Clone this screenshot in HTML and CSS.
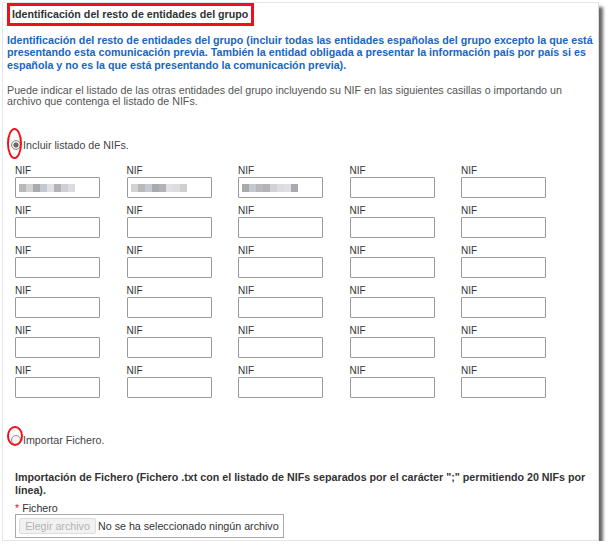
FILE: index.html
```html
<!DOCTYPE html>
<html lang="es">
<head>
<meta charset="utf-8">
<title>Identificación del resto de entidades del grupo</title>
<link rel="stylesheet" href="styles.css">
</head>
<body>
<div class="panel">
  <div class="title">Identificación del resto de entidades del grupo</div>
  <p class="intro">Identificación del resto de entidades del grupo (incluir todas las entidades españolas del grupo excepto la que está presentando esta comunicación previa. También la entidad obligada a presentar la información país por país si es española y no es la que está presentando la comunicación previa).</p>
  <p class="help">Puede indicar el listado de las otras entidades del grupo incluyendo su NIF en las siguientes casillas o importando un archivo que contenga el listado de NIFs.</p>

  <label class="option option-list">
    <input type="radio" name="modo" class="radio" checked>
    <span class="mark mark-tall"></span>
    <span>Incluir listado de NIFs.</span>
  </label>

  <div class="nif-grid">
    <div class="field"><div class="nif-label">NIF</div><div class="nif-input"><span class="px p1"></span><span class="px p2"></span><span class="px p3"></span><span class="px p4"></span><span class="px p5"></span><span class="px p6"></span><span class="px p7"></span><span class="px p8"></span></div></div>
    <div class="field"><div class="nif-label">NIF</div><div class="nif-input"><span class="px p2"></span><span class="px p1"></span><span class="px p4"></span><span class="px p3"></span><span class="px p6"></span><span class="px p5"></span><span class="px p8"></span><span class="px p7"></span></div></div>
    <div class="field"><div class="nif-label">NIF</div><div class="nif-input"><span class="px p3"></span><span class="px p4"></span><span class="px p1"></span><span class="px p6"></span><span class="px p2"></span><span class="px p8"></span><span class="px p5"></span><span class="px p3"></span></div></div>
    <div class="field"><div class="nif-label">NIF</div><div class="nif-input"></div></div>
    <div class="field"><div class="nif-label">NIF</div><div class="nif-input"></div></div>

    <div class="field"><div class="nif-label">NIF</div><div class="nif-input"></div></div>
    <div class="field"><div class="nif-label">NIF</div><div class="nif-input"></div></div>
    <div class="field"><div class="nif-label">NIF</div><div class="nif-input"></div></div>
    <div class="field"><div class="nif-label">NIF</div><div class="nif-input"></div></div>
    <div class="field"><div class="nif-label">NIF</div><div class="nif-input"></div></div>

    <div class="field"><div class="nif-label">NIF</div><div class="nif-input"></div></div>
    <div class="field"><div class="nif-label">NIF</div><div class="nif-input"></div></div>
    <div class="field"><div class="nif-label">NIF</div><div class="nif-input"></div></div>
    <div class="field"><div class="nif-label">NIF</div><div class="nif-input"></div></div>
    <div class="field"><div class="nif-label">NIF</div><div class="nif-input"></div></div>

    <div class="field"><div class="nif-label">NIF</div><div class="nif-input"></div></div>
    <div class="field"><div class="nif-label">NIF</div><div class="nif-input"></div></div>
    <div class="field"><div class="nif-label">NIF</div><div class="nif-input"></div></div>
    <div class="field"><div class="nif-label">NIF</div><div class="nif-input"></div></div>
    <div class="field"><div class="nif-label">NIF</div><div class="nif-input"></div></div>

    <div class="field"><div class="nif-label">NIF</div><div class="nif-input"></div></div>
    <div class="field"><div class="nif-label">NIF</div><div class="nif-input"></div></div>
    <div class="field"><div class="nif-label">NIF</div><div class="nif-input"></div></div>
    <div class="field"><div class="nif-label">NIF</div><div class="nif-input"></div></div>
    <div class="field"><div class="nif-label">NIF</div><div class="nif-input"></div></div>

    <div class="field"><div class="nif-label">NIF</div><div class="nif-input"></div></div>
    <div class="field"><div class="nif-label">NIF</div><div class="nif-input"></div></div>
    <div class="field"><div class="nif-label">NIF</div><div class="nif-input"></div></div>
    <div class="field"><div class="nif-label">NIF</div><div class="nif-input"></div></div>
    <div class="field"><div class="nif-label">NIF</div><div class="nif-input"></div></div>
  </div>

  <label class="option option-file">
    <input type="radio" name="modo" class="radio">
    <span class="mark mark-short"></span>
    <span>Importar Fichero.</span>
  </label>

  <div class="import">
    <p class="import-title">Importación de Fichero (Fichero .txt con el listado de NIFs separados por el carácter ";" permitiendo 20 NIFs por línea).</p>
    <div class="file-label"><span class="req">*</span> Fichero</div>
    <div class="file-box">
      <span class="file-btn">Elegir archivo</span>
      <span class="file-name">No se ha seleccionado ningún archivo</span>
    </div>
  </div>
</div>
</body>
</html>
```
FILE: styles.css
```css
html, body {
  margin: 0;
  padding: 0;
  background: #ffffff;
}

body {
  font-family: "Liberation Sans", Arial, sans-serif;
  font-size: 10.7px;
  color: #333333;
}

.panel {
  position: relative;
  margin: 2px 0 0 2px;
  width: 597px;
  height: 539px;
  box-sizing: border-box;
  padding: 0 3px 0 4px;
  background: #ffffff;
  border: 1px solid #e4e6ea;
  border-right: 1px solid #d9dde3;
  box-shadow: 4px 5px 3px rgba(0, 0, 0, 0.6);
}

.title {
  display: inline-block;
  border: 3px solid #f0101c;
  height: 17px;
  line-height: 17px;
  padding: 0 3px 0 2px;
  font-weight: bold;
  color: #333333;
}

.intro {
  margin: 8px 0 0 0;
  line-height: 12.3px;
  font-weight: bold;
  color: #1766c3;
}

.help {
  margin: 14px 0 0 0;
  line-height: 11.3px;
  color: #555555;
}

.option {
  position: relative;
  display: flex;
  align-items: center;
  height: 14px;
  line-height: 14px;
  color: #444444;
}

.option-list {
  margin-top: 31px;
}

.option-file {
  margin-top: 35px;
}

.radio {
  appearance: none;
  -webkit-appearance: none;
  margin: 0 2px 0 4px;
  width: 10px;
  height: 10px;
  box-sizing: border-box;
  border-radius: 50%;
  border: 1px solid #8c8c8c;
  background: #f4f4f4;
  flex: none;
}

.radio:checked {
  background: radial-gradient(circle, #6a6a6a 0, #6a6a6a 2.3px, #e8e8e8 2.8px);
}

.mark {
  position: absolute;
  border: 2px solid #f0101c;
  border-radius: 50%;
  box-sizing: border-box;
}

.mark-tall {
  left: 0;
  top: -10px;
  width: 15px;
  height: 31px;
}

.mark-short {
  left: 0;
  top: -7px;
  width: 16px;
  height: 20px;
}

.nif-grid {
  margin: 12px 0 0 8px;
  display: grid;
  grid-template-columns: repeat(5, 85px);
  column-gap: 26.5px;
  row-gap: 6px;
}

.nif-label {
  height: 13px;
  line-height: 13px;
  font-size: 10px;
  color: #333333;
}

.nif-input {
  height: 21px;
  box-sizing: border-box;
  border: 1px solid #9a9a9a;
  border-radius: 1px;
  background: #ffffff;
  display: flex;
  align-items: center;
  padding-left: 3px;
}

.px {
  display: inline-block;
  width: 7px;
  height: 8px;
}

.p1 { background: #b9b9bd; }
.p2 { background: #d2d2d6; }
.p3 { background: #a9a9ae; }
.p4 { background: #c6c8d0; }
.p5 { background: #e0e0e2; }
.p6 { background: #b3b3b6; }
.p7 { background: #cfcfd3; }
.p8 { background: #dcdcde; }

.import {
  padding-left: 8px;
}

.import-title {
  margin: 24px 0 0 0;
  line-height: 12.6px;
  font-weight: bold;
  color: #333333;
}

.file-label {
  margin-top: 5px;
  height: 12px;
  line-height: 12px;
  color: #333333;
}

.req {
  color: #f0101c;
}

.file-box {
  margin-top: 0;
  width: 269px;
  height: 24px;
  box-sizing: border-box;
  border: 1px solid #a9a9a9;
  display: flex;
  align-items: center;
  padding-left: 3px;
  gap: 2px;
}

.file-btn {
  width: 77px;
  height: 16px;
  box-sizing: border-box;
  border: 1px solid #dedede;
  background: #f1f1f1;
  color: #b3b3b3;
  line-height: 14px;
  text-align: center;
  border-radius: 2px;
}

.file-name {
  color: #333333;
  white-space: nowrap;
}
```
